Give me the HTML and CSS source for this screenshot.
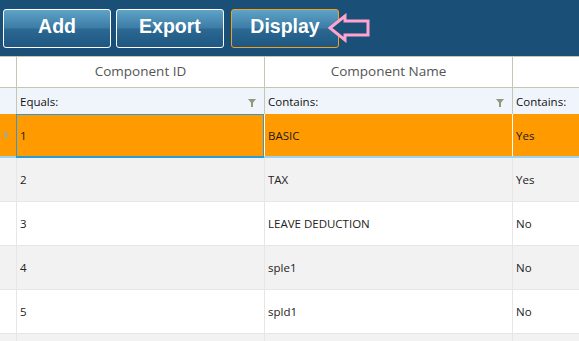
FILE: index.html
```html
<!DOCTYPE html>
<html lang="en">
<head>
  <meta charset="UTF-8" />
  <title>Components</title>
  <link rel="stylesheet" href="styles.css">
</head>
<body>

  <header class="toolbar">
    <button class="tool-btn">Add</button>
    <button class="tool-btn">Export</button>
    <button class="tool-btn active">Display</button>
    <svg class="pointer" width="44" height="30" viewBox="0 0 44 30">
      <path d="M3 15 L18 3 L18 8 L41 8 L41 22 L18 22 L18 27 Z" fill="#1a4f77" stroke="#ffa3cf" stroke-width="3" stroke-linejoin="miter"/>
    </svg>
  </header>

  <div class="grid">
    <div class="row head">
      <div class="cell ind"></div>
      <div class="cell">Component ID</div>
      <div class="cell">Component Name</div>
      <div class="cell"></div>
    </div>

    <div class="row filter">
      <div class="cell ind"></div>
      <div class="cell">Equals: <span class="funnel"></span></div>
      <div class="cell">Contains: <span class="funnel"></span></div>
      <div class="cell">Contains:</div>
    </div>

    <div class="row data selected">
      <div class="cell ind"><span class="caret"></span></div>
      <div class="cell current">1</div>
      <div class="cell">BASIC</div>
      <div class="cell">Yes</div>
    </div>
    <div class="row data alt">
      <div class="cell ind"></div>
      <div class="cell">2</div>
      <div class="cell">TAX</div>
      <div class="cell">Yes</div>
    </div>
    <div class="row data">
      <div class="cell ind"></div>
      <div class="cell">3</div>
      <div class="cell">LEAVE DEDUCTION</div>
      <div class="cell">No</div>
    </div>
    <div class="row data alt">
      <div class="cell ind"></div>
      <div class="cell">4</div>
      <div class="cell">sple1</div>
      <div class="cell">No</div>
    </div>
    <div class="row data">
      <div class="cell ind"></div>
      <div class="cell">5</div>
      <div class="cell">spld1</div>
      <div class="cell">No</div>
    </div>
    <div class="row data alt">
      <div class="cell ind"></div>
      <div class="cell"></div>
      <div class="cell"></div>
      <div class="cell"></div>
    </div>
  </div>

</body>
</html>
```

FILE: styles.css
```css
body {
  margin: 0;
  font-family: "Open Sans", "Noto Sans", sans-serif;
  background: #fff;
  overflow: hidden;
}

.toolbar {
  display: flex;
  align-items: center;
  gap: 5px;
  height: 56px;
  padding: 0 0 0 3px;
  background: #1a4f77;
  box-sizing: border-box;
}

.tool-btn {
  width: 108px;
  height: 39px;
  border: 1px solid #ffffff;
  border-radius: 3px;
  background: linear-gradient(#5fa3c6 0%, #3c7ca6 48%, #2c6892 52%, #1d5782 100%);
  color: #fff;
  font-family: "Liberation Sans", Arial, sans-serif;
  font-weight: bold;
  font-size: 19.5px;
  padding: 0 0 3px;
  cursor: pointer;
}

.tool-btn.active {
  border-color: #f5a019;
  margin-left: 2px;
}

.pointer {
  margin-left: -17px;
  margin-top: 0;
}

.grid {
  border-top: 1px solid #c6c6b4;
  font-size: 12px;
  color: #222;
}

.row {
  display: grid;
  grid-template-columns: 16px 248px 248px 1fr;
}

.cell {
  display: flex;
  align-items: center;
  padding: 0 3px;
  border-left: 1px solid #e6e6e6;
  box-sizing: border-box;
  white-space: nowrap;
  overflow: hidden;
}

.cell.ind {
  border-left: none;
  padding: 0 0 0 4px;
}

.head {
  height: 30px;
  background: #fff;
  border-bottom: 1px solid #c6c6b4;
}

.head .cell {
  justify-content: center;
  font-size: 13.5px;
  color: #555;
  border-left-color: #c6c6b4;
  padding-bottom: 2px;
}

.head .cell.ind {
  border-left: none;
}

.filter {
  height: 26px;
  background: #f0f5fc;
  color: #111;
  font-size: 11.5px;
}

.filter .cell {
  border-left-color: #c6c6b4;
  justify-content: space-between;
  padding-right: 8px;
}

.filter .cell.ind {
  border-left: none;
}

.funnel {
  width: 0;
  height: 0;
  border-left: 4px solid transparent;
  border-right: 4px solid transparent;
  border-top: 5px solid #8c9c7c;
  position: relative;
  margin-top: 1px;
}

.funnel::after {
  content: "";
  position: absolute;
  left: -1px;
  top: -1px;
  width: 2px;
  height: 4px;
  background: #8c9c7c;
}

.data {
  height: 44px;
  border-bottom: 1px solid #e6e6e6;
  box-sizing: border-box;
  font-size: 11.5px;
}

.data.alt {
  background: #f2f2f2;
}

.data.selected {
  background: #ff9a00;
  border-bottom: 2px solid #9dd3ef;
  color: #1a1a1a;
}

.data.selected .cell {
  border-left-color: #ffffff;
}

.data.selected .cell.current {
  border: 1px solid #2a9bd8;
  margin-bottom: -2px;
  border-bottom-width: 2px;
}

.caret {
  width: 0;
  height: 0;
  border-top: 4px solid transparent;
  border-bottom: 4px solid transparent;
  border-left: 5px solid #a9a984;
}
```
